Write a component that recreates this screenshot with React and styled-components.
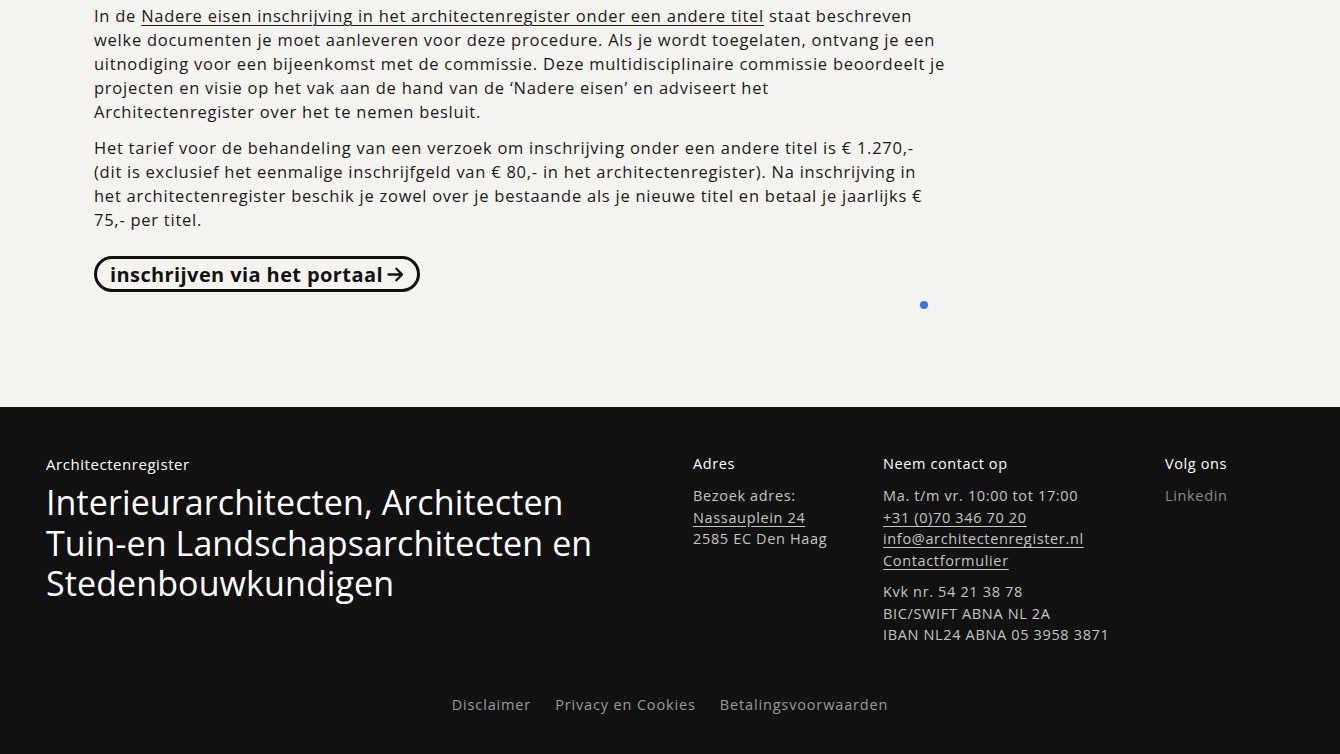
import styled, { createGlobalStyle } from 'styled-components';

const GlobalStyle = createGlobalStyle`
  html, body {
    margin: 0;
    padding: 0;
    background: #f5f4f0;
    font-family: 'Open Sans', 'Noto Sans', sans-serif;
    -webkit-font-smoothing: antialiased;
  }
`;

const Page = styled.div`
  width: 1340px;
  min-height: 754px;
  display: flex;
  flex-direction: column;
`;

const Main = styled.main`
  position: relative;
  height: 407px;
  padding: 4px 0 0 94px;
  box-sizing: border-box;
  background: #f5f4f0;
`;

const Paragraph = styled.p`
  margin: 0 0 12px;
  width: 900px;
  font-size: 16.5px;
  line-height: 24px;
  letter-spacing: 0.75px;
  color: #1a1a1a;
  white-space: nowrap;

  a {
    color: inherit;
    text-decoration: underline;
    text-underline-offset: 3px;
    text-decoration-thickness: 1px;
  }
`;

const PortalButton = styled.a`
  display: inline-flex;
  align-items: center;
  gap: 2px;
  margin-top: 12px;
  height: 36px;
  padding: 0 11px 0 13px;
  box-sizing: border-box;
  border: 3px solid #111;
  border-radius: 20px;
  font-size: 20px;
  font-weight: 700;
  letter-spacing: 0.4px;
  color: #111;
  text-decoration: none;

  svg {
    width: 21px;
    height: 21px;
  }
`;

const Dot = styled.span`
  position: absolute;
  left: 920px;
  top: 301px;
  width: 8px;
  height: 8px;
  border-radius: 50%;
  background: #3d72dc;
`;

const Footer = styled.footer`
  flex: 1;
  background: #111111;
  color: #fff;
  padding: 47px 0 0 46px;
  box-sizing: border-box;
  height: 347px;
`;

const FooterGrid = styled.div`
  display: grid;
  grid-template-columns: 647px 190px 282px 1fr;
`;

const Brand = styled.div`
  font-size: 15px;
  line-height: 20px;
  letter-spacing: 0.55px;
  margin-bottom: 8px;
`;

const Tagline = styled.h2`
  margin: 0;
  font-size: 34px;
  font-weight: 400;
  line-height: 40.5px;
  letter-spacing: 0.1px;
`;

const ColTitle = styled.h3`
  margin: 0 0 11px;
  font-size: 14.5px;
  font-weight: 400;
  line-height: 20px;
  letter-spacing: 0.6px;
  color: #fff;
`;

const Lines = styled.div`
  font-size: 14.5px;
  line-height: 21.5px;
  letter-spacing: 0.65px;
  color: ${p => (p.muted ? '#8a8a8a' : '#c4c4c4')};
  margin-bottom: ${p => (p.spaced ? '10px' : '0')};

  a {
    display: block;
    color: inherit;
    text-decoration: underline;
    text-underline-offset: 3px;
  }
`;

const Legal = styled.nav`
  display: flex;
  justify-content: center;
  gap: 24px;
  margin: 49px 0 0 -46px;
  font-size: 14.5px;
  letter-spacing: 0.85px;

  a {
    color: #9a9a9a;
    text-decoration: none;
  }
`;

const Arrow = () => (
  <svg viewBox="0 0 24 24" fill="none" stroke="currentColor" strokeWidth="2.6" strokeLinecap="round" strokeLinejoin="round">
    <path d="M4 12h15M13 5.5l6.5 6.5-6.5 6.5" />
  </svg>
);

export default function App() {
  return (
    <Page>
      <GlobalStyle />
      <Main>
        <Paragraph>
          In de <a href="#">Nadere eisen inschrijving in het architectenregister onder een andere titel</a> staat beschreven<br />
          welke documenten je moet aanleveren voor deze procedure. Als je wordt toegelaten, ontvang je een<br />
          uitnodiging voor een bijeenkomst met de commissie. Deze multidisciplinaire commissie beoordeelt je<br />
          projecten en visie op het vak aan de hand van de ‘Nadere eisen’ en adviseert het<br />
          Architectenregister over het te nemen besluit.
        </Paragraph>
        <Paragraph>
          Het tarief voor de behandeling van een verzoek om inschrijving onder een andere titel is € 1.270,-<br />
          (dit is exclusief het eenmalige inschrijfgeld van € 80,- in het architectenregister). Na inschrijving in<br />
          het architectenregister beschik je zowel over je bestaande als je nieuwe titel en betaal je jaarlijks €<br />
          75,- per titel.
        </Paragraph>
        <PortalButton href="#">
          inschrijven via het portaal <Arrow />
        </PortalButton>
        <Dot />
      </Main>
      <Footer>
        <FooterGrid>
          <div>
            <Brand>Architectenregister</Brand>
            <Tagline>
              Interieurarchitecten, Architecten<br />
              Tuin-en Landschapsarchitecten en<br />
              Stedenbouwkundigen
            </Tagline>
          </div>
          <div>
            <ColTitle>Adres</ColTitle>
            <Lines>
              Bezoek adres:
              <a href="#">Nassauplein 24</a>
              2585 EC Den Haag
            </Lines>
          </div>
          <div>
            <ColTitle>Neem contact op</ColTitle>
            <Lines spaced>
              Ma. t/m vr. 10:00 tot 17:00
              <a href="#">+31 (0)70 346 70 20</a>
              <a href="#">info@architectenregister.nl</a>
              <a href="#">Contactformulier</a>
            </Lines>
            <Lines>
              Kvk nr. 54 21 38 78<br />
              BIC/SWIFT ABNA NL 2A<br />
              IBAN NL24 ABNA 05 3958 3871
            </Lines>
          </div>
          <div>
            <ColTitle>Volg ons</ColTitle>
            <Lines muted>Linkedin</Lines>
          </div>
        </FooterGrid>
        <Legal>
          <a href="#">Disclaimer</a>
          <a href="#">Privacy en Cookies</a>
          <a href="#">Betalingsvoorwaarden</a>
        </Legal>
      </Footer>
    </Page>
  );
}
